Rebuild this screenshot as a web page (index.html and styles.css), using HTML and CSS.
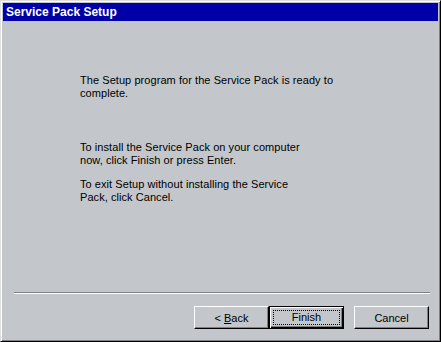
FILE: index.html
```html
<!DOCTYPE html>
<html>
<head>
<meta charset="utf-8">
<link rel="stylesheet" href="styles.css">
</head>
<body>
<div class="window">
  <div class="titlebar">Service Pack Setup</div>
  <div class="content">
    <div class="texts">
      <p class="para p1">The Setup program for the Service Pack is ready to<br>complete.</p>
      <p class="para p2">To install the Service Pack on your computer<br>now, click Finish or press Enter.</p>
      <p class="para p3">To exit Setup without installing the Service<br>Pack, click Cancel.</p>
    </div>
    <div class="footer">
      <div class="separator"></div>
      <div class="buttons">
        <button class="btn"><span class="label">&lt;&nbsp;<u>B</u>ack</span></button>
        <button class="btn default"><span class="focus">Finish</span></button>
        <button class="btn cancel"><span class="label">Cancel</span></button>
      </div>
    </div>
  </div>
</div>
</body>
</html>
```
FILE: styles.css
```css
html, body {
  margin: 0;
  padding: 0;
  background: #c3c7cb;
}
.window {
  width: 441px;
  height: 342px;
  box-sizing: border-box;
  background: #c3c7cb;
  border: 1px solid;
  border-color: #dfdfdf #000 #000 #dfdfdf;
  box-shadow: inset 1px 1px #fff, inset -1px -1px #808080;
  padding: 2px;
  display: flex;
  flex-direction: column;
  font-family: "Liberation Sans", Arial, sans-serif;
  font-size: 11px;
  color: #000;
}
.titlebar {
  height: 18px;
  background: #0000a8;
  color: #fff;
  font-weight: bold;
  font-size: 12px;
  line-height: 18px;
  padding-left: 3px;
  white-space: nowrap;
}
.content {
  flex: 1;
  display: flex;
  flex-direction: column;
  padding: 0 8px 10px 11px;
}
.texts {
  padding-left: 66px;
}
.para {
  margin: 0;
  line-height: 13px;
  white-space: nowrap;
  letter-spacing: 0.06px;
}
.p1 { margin-top: 53px; }
.p2 { margin-top: 41px; }
.p3 { margin-top: 11px; }
.footer {
  margin-top: auto;
}
.separator {
  border-top: 1px solid #808080;
  border-bottom: 1px solid #fff;
  height: 0;
}
.buttons {
  display: flex;
  justify-content: flex-end;
  margin-top: 12px;
  padding-right: 1px;
}
.btn {
  width: 75px;
  height: 23px;
  box-sizing: border-box;
  margin: 0;
  padding: 0;
  background: #c3c7cb;
  border: 1px solid;
  border-color: #fff #000 #000 #fff;
  box-shadow: inset -1px -1px #808080;
  font-family: "Liberation Sans", Arial, sans-serif;
  font-size: 11px;
  color: #000;
  display: flex;
  align-items: center;
  justify-content: center;
}
.label {
  white-space: nowrap;
}
.btn.default {
  border: 1px solid #000;
  box-shadow: inset 1px 1px #fff, inset -1px -1px #000, inset -2px -2px #808080;
}
.focus {
  display: block;
  box-sizing: border-box;
  width: 67px;
  height: 15px;
  line-height: 13px;
  border: 1px dotted #000;
  text-align: center;
}
.btn.cancel {
  margin-left: 10px;
}
```
